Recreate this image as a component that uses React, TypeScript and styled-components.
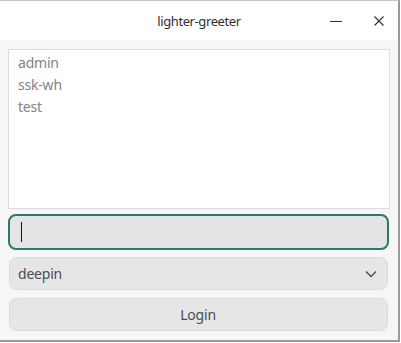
import React, { FC } from "react";
import styled, { createGlobalStyle } from "styled-components";

const GlobalStyle = createGlobalStyle`
  html, body {
    margin: 0;
    padding: 0;
    background: #ffffff;
  }
  body {
    font-family: "Noto Sans", "Open Sans", sans-serif;
  }
`

const Window = styled.div`
  width: 400px;
  height: 342px;
  box-sizing: border-box;
  border-top: 1px solid #c8c8c8;
  border-right: 2px solid #9a9a9a;
  border-bottom: 2px solid #9a9a9a;
  display: flex;
  flex-direction: column;
  background: #f6f6f6;
`
const TitleBar = styled.div`
  height: 39px;
  background: #ffffff;
  display: grid;
  grid-template-columns: 1fr auto 1fr;
  align-items: center;
`
const Title = styled.div`
  grid-column: 2;
  font-size: 13px;
  color: #303030;
  letter-spacing: -0.4px;
`
const TitleButtons = styled.div`
  grid-column: 3;
  justify-self: end;
  display: flex;
  gap: 19px;
  padding-right: 7px;
`
const TitleButton = styled.button`
  width: 24px;
  height: 24px;
  border: none;
  padding: 0;
  background: transparent;
  display: flex;
  align-items: center;
  justify-content: center;
`
const Body = styled.div`
  flex: 1;
  display: flex;
  flex-direction: column;
  padding: 9px 8px 0 8px;
`
const UserList = styled.ul`
  margin: 0;
  padding: 2px 0 0 9px;
  list-style: none;
  height: 160px;
  box-sizing: border-box;
  background: #ffffff;
  border: 1px solid #dcdcdc;
  width: 382px;
`
const UserItem = styled.li`
  font-size: 14px;
  line-height: 22px;
  color: #80838b;
  letter-spacing: -0.2px;
`
const PasswordField = styled.div`
  margin-top: 5px;
  width: 381px;
  height: 36px;
  box-sizing: border-box;
  border: 2px solid #2a7a6c;
  border-radius: 8px;
  background: #e4e4e4;
  display: flex;
  align-items: center;
  padding-left: 11px;
`
const Caret = styled.div`
  width: 1px;
  height: 20px;
  background: #111111;
`
const Control = styled.div<{ $center?: boolean; $gap: number }>`
  margin: ${p => p.$gap}px 0 0 1px;
  width: 379px;
  height: 33px;
  box-sizing: border-box;
  border: 1px solid #dadada;
  border-radius: 8px;
  background: #e6e6e6;
  display: flex;
  align-items: center;
  justify-content: ${p => (p.$center ? "center" : "space-between")};
  padding: 0 9px 0 8px;
  font-size: 14px;
  color: #484c58;
  letter-spacing: -0.2px;
`

const App: FC = () => {
  const users = ["admin", "ssk-wh", "test"]

  return (
    <>
      <GlobalStyle />
      <Window>
        <TitleBar>
          <Title>lighter-greeter</Title>
          <TitleButtons>
            <TitleButton aria-label="minimize">
              <svg width="12" height="12" viewBox="0 0 12 12">
                <line x1="0" y1="6.5" x2="12" y2="6.5" stroke="#303030" strokeWidth="1" />
              </svg>
            </TitleButton>
            <TitleButton aria-label="close">
              <svg width="12" height="12" viewBox="0 0 12 12">
                <path d="M1.5 1.5 L10.5 10.5 M10.5 1.5 L1.5 10.5" stroke="#303030" strokeWidth="1.1" />
              </svg>
            </TitleButton>
          </TitleButtons>
        </TitleBar>
        <Body>
          <UserList>
            {users.map(u => (
              <UserItem key={u}>{u}</UserItem>
            ))}
          </UserList>
          <PasswordField>
            <Caret />
          </PasswordField>
          <Control $gap={7}>
            <span>deepin</span>
            <svg width="14" height="14" viewBox="0 0 14 14">
              <path d="M2 4.5 L7 9.5 L12 4.5" fill="none" stroke="#4a4e5a" strokeWidth="1.4" />
            </svg>
          </Control>
          <Control $center $gap={8}>Login</Control>
        </Body>
      </Window>
    </>
  )
}

export default App
